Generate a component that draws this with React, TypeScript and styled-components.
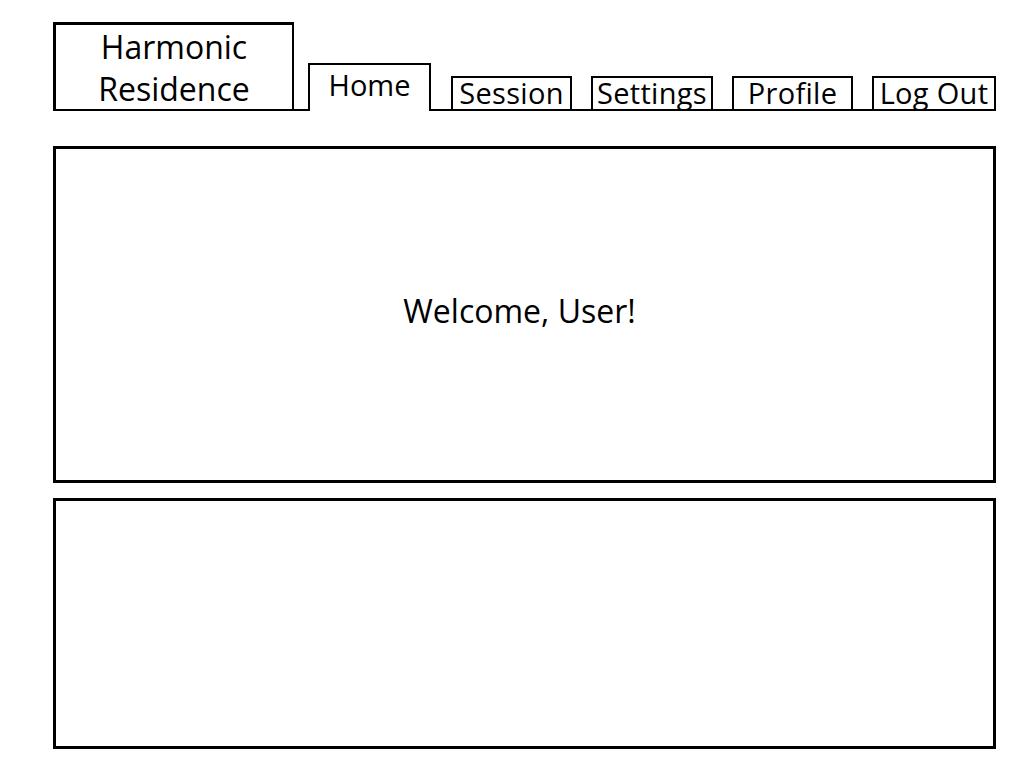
import React from "react";
import styled, { createGlobalStyle } from "styled-components";

const GlobalStyle = createGlobalStyle`
  html, body {
    margin: 0;
    padding: 0;
    background: #fff;
  }
  body {
    font-family: "Open Sans", "Liberation Sans", sans-serif;
    color: #000;
  }
`;

const Page = styled.div`
  width: 1024px;
  height: 768px;
  box-sizing: border-box;
  padding: 22px 28px 0 53px;
`;

const Header = styled.header`
  display: flex;
  align-items: flex-end;
  height: 87px;
  border-bottom: 2px solid #000;
`;

const Logo = styled.div`
  width: 242px;
  height: 87px;
  box-sizing: border-box;
  border: 3px solid #000;
  border-right-width: 2px;
  border-bottom: none;
  display: flex;
  flex-direction: column;
  align-items: center;
  justify-content: center;
  font-size: 32px;
  line-height: 42px;
  padding-top: 1px;
`;

const Nav = styled.nav`
  display: flex;
  align-items: flex-end;
  gap: 19px;
  margin-left: 14px;
`;

const Tab = styled.a<{ $active?: boolean; $w: number }>`
  width: ${({ $w }) => $w}px;
  height: ${({ $active }) => ($active ? 48 : 33)}px;
  box-sizing: border-box;
  border: 2px solid #000;
  border-bottom: none;
  margin-bottom: ${({ $active }) => ($active ? -2 : 0)}px;
  margin-right: ${({ $active }) => ($active ? 1 : 0)}px;
  background: #fff;
  display: flex;
  justify-content: center;
  align-items: ${({ $active }) => ($active ? "flex-start" : "flex-end")};
  font-size: 29px;
  line-height: ${({ $active }) => ($active ? 40 : 33)}px;
  letter-spacing: ${({ $active }) => ($active ? 0 : 0.3)}px;
  white-space: nowrap;
  color: #000;
  text-decoration: none;
  cursor: pointer;
`;

const Panel = styled.section<{ $h: number }>`
  height: ${({ $h }) => $h}px;
  box-sizing: border-box;
  border: 3px solid #000;
  display: flex;
  align-items: center;
  justify-content: center;
  margin-top: 15px;
  &:first-of-type {
    margin-top: 35px;
  }
`;

const Welcome = styled.h1`
  margin: 0 10px 8px 0;
  font-size: 32px;
  font-weight: 400;
`;

const tabs = [
  { label: "Session", w: 121 },
  { label: "Settings", w: 122 },
  { label: "Profile", w: 121 },
  { label: "Log Out", w: 124 },
];

const App = () => {
  return (
    <Page>
      <GlobalStyle />
      <Header>
        <Logo>
          <span>Harmonic</span>
          <span>Residence</span>
        </Logo>
        <Nav>
          <Tab $active $w={123}>
            Home
          </Tab>
          {tabs.map((t) => (
            <Tab key={t.label} $w={t.w}>
              {t.label}
            </Tab>
          ))}
        </Nav>
      </Header>
      <Panel $h={337}>
        <Welcome>Welcome, User!</Welcome>
      </Panel>
      <Panel $h={251} />
    </Page>
  );
};

export default App;
